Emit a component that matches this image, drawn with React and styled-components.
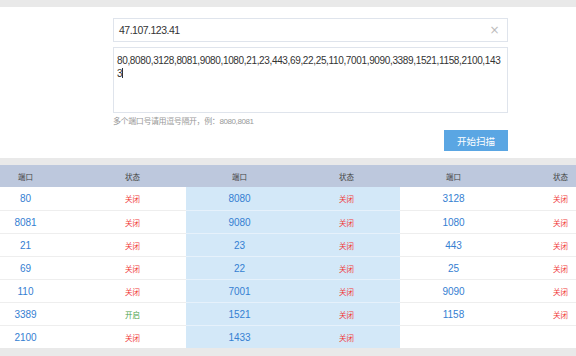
import React from 'react'
import styled, { createGlobalStyle } from 'styled-components'

const GlobalStyle = createGlobalStyle`
  html, body {
    margin: 0;
    padding: 0;
    background: #e9e9e9;
    overflow: hidden;
    font-family: "Liberation Sans", "Noto Sans CJK SC", sans-serif;
  }
`

const Page = styled.div`
  width: 576px;
  height: 356px;
  overflow: hidden;
  padding-top: 7px;
  box-sizing: border-box;
`

const FormPanel = styled.div`
  background: #fff;
  height: 151px;
  padding: 11px 0 0 113px;
  box-sizing: border-box;
`

const Form = styled.div`
  width: 395px;
  display: flex;
  flex-direction: column;
`

const InputBox = styled.div`
  height: 24px;
  border: 1px solid #dfe4ec;
  box-sizing: border-box;
  display: flex;
  align-items: center;
  justify-content: space-between;
  padding: 0 8px 0 5px;
  font-size: 10.5px;
  letter-spacing: -0.5px;
  color: #333;
`

const Clear = styled.span`
  color: #bbb;
  font-size: 12px;
  font-family: "DejaVu Sans", sans-serif;
`

const TextArea = styled.div`
  margin-top: 5px;
  height: 66px;
  border: 1px solid #dfe4ec;
  box-sizing: border-box;
  padding: 6px 4px 6px 3px;
  font-size: 10px;
  letter-spacing: -0.35px;
  line-height: 13px;
  color: #333;
  word-break: break-all;
`

const Caret = styled.span`
  display: inline-block;
  width: 1px;
  height: 10px;
  background: #333;
  vertical-align: -1px;
`

const Hint = styled.div`
  margin-top: 4px;
  font-size: 8px;
  letter-spacing: -0.4px;
  color: #999;
  line-height: 10px;
`

const ButtonRow = styled.div`
  display: flex;
  justify-content: flex-end;
  margin-top: 3px;
`

const ScanButton = styled.button`
  width: 64px;
  height: 21px;
  border: none;
  background: #5aa6e3;
  color: #fff;
  font-family: "Noto Sans CJK SC", sans-serif;
  font-size: 9.5px;
  padding: 0;
`

const Table = styled.div`
  margin-top: 7px;
  margin-left: -28px;
  width: 642px;
  display: grid;
  grid-template-columns: repeat(6, 107px);
  background: #fff;
`

const HeadCell = styled.div`
  height: 22px;
  background: #bdc8dd;
  display: flex;
  align-items: center;
  justify-content: center;
  font-family: "Noto Sans CJK SC", sans-serif;
  font-size: 7.5px;
  color: #444;
`

const Cell = styled.div`
  height: 23px;
  box-sizing: border-box;
  border-top: ${p => (p.$first ? 'none' : `1px solid ${p.$hl ? '#e6f1fb' : '#eeeeee'}`)};
  background: ${p => (p.$hl ? '#d3e8f8' : '#fff')};
  display: flex;
  align-items: center;
  justify-content: center;
`

const Port = styled.span`
  font-size: 10px;
  color: #3580d2;
`

const Status = styled.span`
  font-family: "Noto Sans CJK SC", sans-serif;
  font-size: 7.5px;
  color: ${p => (p.$open ? '#4aa24a' : '#f03a3a')};
`

const rows = [
  [[80, 0], [8080, 0], [3128, 0]],
  [[8081, 0], [9080, 0], [1080, 0]],
  [[21, 0], [23, 0], [443, 0]],
  [[69, 0], [22, 0], [25, 0]],
  [[110, 0], [7001, 0], [9090, 0]],
  [[3389, 1], [1521, 0], [1158, 0]],
  [[2100, 0], [1433, 0], null],
]

const App = () => {
  return (
    <Page>
      <GlobalStyle />
      <FormPanel>
        <Form>
          <InputBox>
            <span>47.107.123.41</span>
            <Clear>×</Clear>
          </InputBox>
          <TextArea>
            80,8080,3128,8081,9080,1080,21,23,443,69,22,25,110,7001,9090,3389,1521,1158,2100,1433<Caret />
          </TextArea>
          <Hint>多个端口号请用逗号隔开，例：8080,8081</Hint>
          <ButtonRow>
            <ScanButton>开始扫描</ScanButton>
          </ButtonRow>
        </Form>
      </FormPanel>
      <Table>
        {[0, 1, 2].map(i => (
          <React.Fragment key={i}>
            <HeadCell>端口</HeadCell>
            <HeadCell>状态</HeadCell>
          </React.Fragment>
        ))}
        {rows.map((row, r) =>
          row.map((item, c) => (
            <React.Fragment key={`${r}-${c}`}>
              <Cell $hl={c === 1} $first={r === 0}>
                {item && <Port>{item[0]}</Port>}
              </Cell>
              <Cell $hl={c === 1} $first={r === 0}>
                {(item || c === 1) && (
                  <Status $open={item && item[1]}>{item && item[1] ? '开启' : '关闭'}</Status>
                )}
              </Cell>
            </React.Fragment>
          ))
        )}
      </Table>
    </Page>
  )
}

export default App
